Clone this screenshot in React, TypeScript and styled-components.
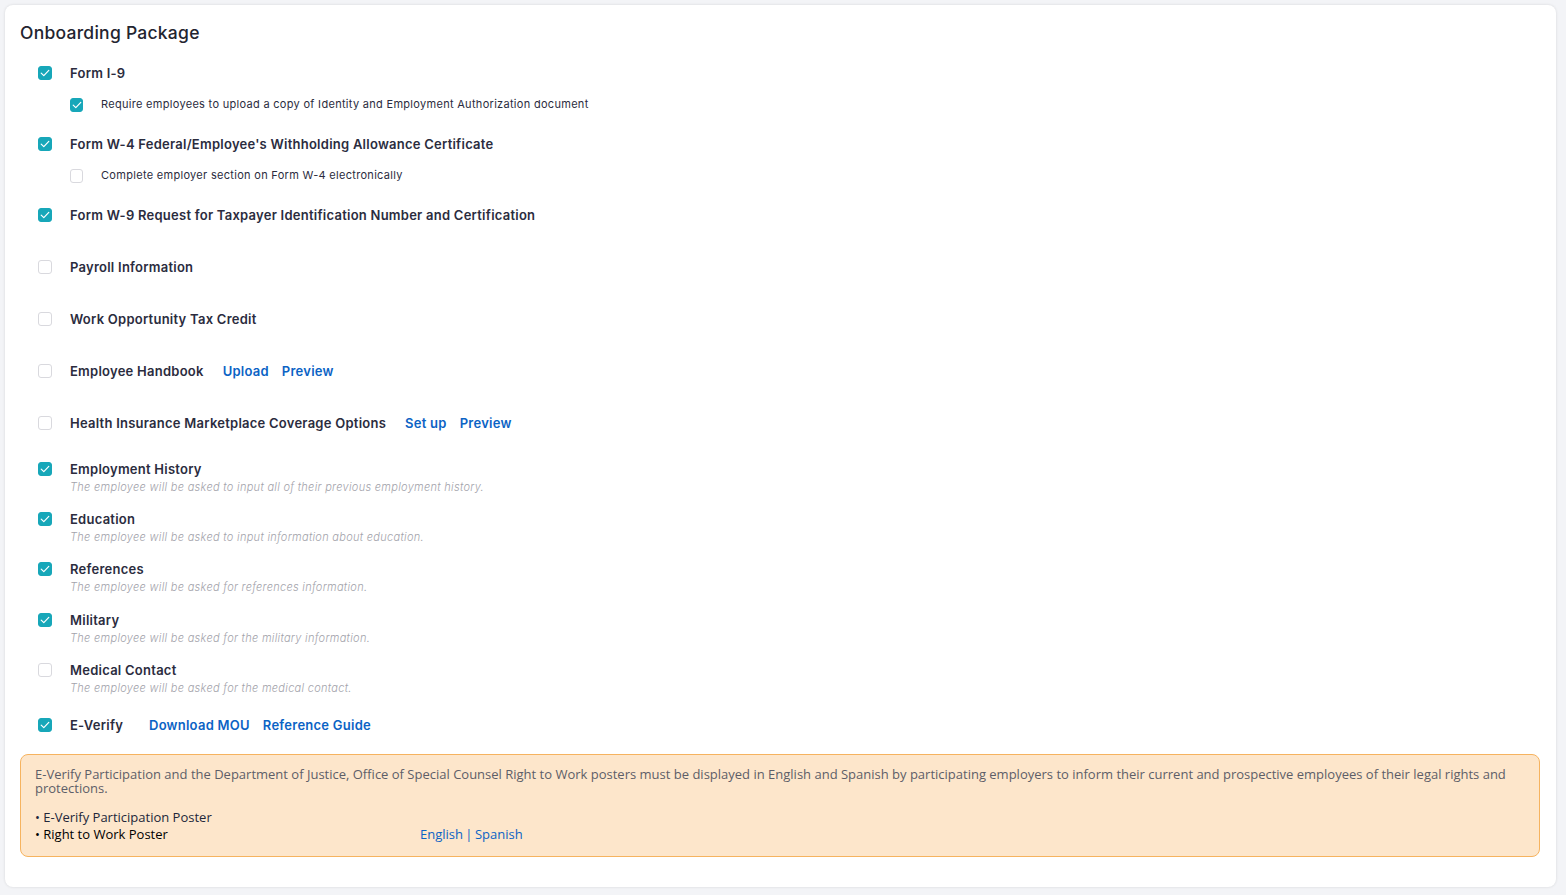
import React from 'react';
import styled, { createGlobalStyle } from 'styled-components';

/** Fonte principal dos rótulos e fonte do aviso. */
const LABEL_FONT = `Inter, "Noto Sans", "Liberation Sans", sans-serif`;
const NOTE_FONT = `"Open Sans", "Noto Sans", "Liberation Sans", sans-serif`;

const teal = '#17a7b9';
const linkBlue = '#0b63c5';
const ink = '#2b2c3e';

const GlobalStyle = createGlobalStyle`
  * { box-sizing: border-box; }
  html, body {
    margin: 0;
    padding: 0;
    background: #f3f4f7;
    font-family: ${LABEL_FONT};
  }
`;

const Page = styled.div`
  padding: 5px 10px 7px 5px;
  min-height: 895px;
`;

const Card = styled.section`
  background: #fff;
  border-radius: 8px;
  box-shadow: 0 0 3px rgba(0, 0, 0, 0.12);
  padding: 16px 16px 30px 15px;
`;

const Title = styled.h3`
  margin: 0 0 18px;
  font-size: 17.5px;
  line-height: 24px;
  font-weight: 500;
  letter-spacing: 0.25px;
  color: #23242f;
`;

const List = styled.div`
  display: flex;
  flex-direction: column;
`;

/** Linha de item (checkbox + rótulo + links). */
const Row = styled.div<{ $mt: number; $sub?: boolean }>`
  display: flex;
  align-items: center;
  height: 20px;
  margin-top: ${p => p.$mt}px;
  padding-left: ${p => (p.$sub ? 50 : 18)}px;
`;

const Box = styled.span<{ $on: boolean; $small?: boolean }>`
  flex: none;
  width: ${p => (p.$small ? 13 : 14)}px;
  height: 14px;
  border-radius: 3px;
  display: flex;
  align-items: center;
  justify-content: center;
  background: ${p => (p.$on ? teal : '#fff')};
  border: 1px solid ${p => (p.$on ? teal : '#d9d9de')};
  margin-top: ${p => (p.$small ? 2 : 0)}px;
`;

const Label = styled.span<{ $sub?: boolean; $w?: number }>`
  margin-left: 18px;
  font-size: ${p => (p.$sub ? 11 : 13)}px;
  font-weight: ${p => (p.$sub ? 400 : 600)};
  letter-spacing: ${p => (p.$sub ? 0.3 : 0.25)}px;
  color: ${ink};
  white-space: nowrap;
  ${p => (p.$w ? `width: ${p.$w}px;` : '')}
`;

const Links = styled.span`
  display: flex;
  gap: 13px;
  margin-left: 19px;
`;

const LinkText = styled.a`
  font-size: 13px;
  font-weight: 600;
  letter-spacing: 0.25px;
  color: ${linkBlue};
  text-decoration: none;
  cursor: pointer;
`;

const Desc = styled.div`
  padding-left: 50px;
  margin-top: 1px;
  height: 14px;
  line-height: 14px;
  font-size: 11px;
  font-weight: 300;
  font-style: italic;
  letter-spacing: 0.3px;
  color: #a3a3ab;
  white-space: nowrap;
`;

const Notice = styled.div`
  margin-top: 19px;
  background: #fde6cb;
  border: 1px solid #f6b35f;
  border-radius: 8px;
  padding: 12px 14px 13px;
  font-family: ${NOTE_FONT};
  font-size: 13px;
  line-height: 14px;
  color: #5d5e68;
`;

const PosterGrid = styled.div`
  display: grid;
  grid-template-columns: 385px auto;
  margin-top: 14px;
  line-height: 17px;
  font-size: 13px;
`;

const Poster = styled.span<{ $dark?: boolean }>`
  color: ${p => (p.$dark ? '#000' : '#22263a')};
`;

const Langs = styled.span`
  color: ${linkBlue};
  word-spacing: -1px;
`;

const Check = () => (
  <svg width="10" height="8" viewBox="0 0 10 8" fill="none">
    <path d="M1.2 4.1 3.8 6.6 8.8 1.4" stroke="#fff" strokeWidth="1.2" strokeLinecap="round" strokeLinejoin="round" />
  </svg>
);

const CheckBox = ({ on, small }: { on: boolean; small?: boolean }) => (
  <Box $on={on} $small={small}>{on && <Check />}</Box>
);

type Item = {
  label: string;
  on: boolean;
  mt: number;
  sub?: boolean;
  links?: string[];
  desc?: string;
  w?: number;
};

const items: Item[] = [
  { label: 'Form I-9', on: true, mt: 0 },
  { label: 'Require employees to upload a copy of Identity and Employment Authorization document', on: true, mt: 11, sub: true },
  { label: "Form W-4 Federal/Employee's Withholding Allowance Certificate", on: true, mt: 20 },
  { label: 'Complete employer section on Form W-4 electronically', on: false, mt: 11, sub: true },
  { label: 'Form W-9 Request for Taxpayer Identification Number and Certification', on: true, mt: 20 },
  { label: 'Payroll Information', on: false, mt: 32 },
  { label: 'Work Opportunity Tax Credit', on: false, mt: 32 },
  { label: 'Employee Handbook', on: false, mt: 32, links: ['Upload', 'Preview'] },
  { label: 'Health Insurance Marketplace Coverage Options', on: false, mt: 32, links: ['Set up', 'Preview'] },
  { label: 'Employment History', on: true, mt: 26, desc: 'The employee will be asked to input all of their previous employment history.' },
  { label: 'Education', on: true, mt: 15, desc: 'The employee will be asked to input information about education.' },
  { label: 'References', on: true, mt: 15, desc: 'The employee will be asked for references information.' },
  { label: 'Military', on: true, mt: 16, desc: 'The employee will be asked for the military information.' },
  { label: 'Medical Contact', on: false, mt: 15, desc: 'The employee will be asked for the medical contact.' },
  { label: 'E-Verify', on: true, mt: 20, links: ['Download MOU', 'Reference Guide'], w: 60 },
];

export default function App() {
  return (
    <>
      <GlobalStyle />
      <Page>
        <Card>
          <Title>Onboarding Package</Title>
          <List>
            {items.map(it => (
              <React.Fragment key={it.label}>
                <Row $mt={it.mt} $sub={it.sub}>
                  <CheckBox on={it.on} small={it.sub} />
                  <Label $sub={it.sub} $w={it.w}>{it.label}</Label>
                  {it.links && (
                    <Links>
                      {it.links.map(l => <LinkText key={l}>{l}</LinkText>)}
                    </Links>
                  )}
                </Row>
                {it.desc && <Desc>{it.desc}</Desc>}
              </React.Fragment>
            ))}
          </List>
          <Notice>
            E-Verify Participation and the Department of Justice, Office of Special Counsel Right to Work posters must be
            displayed in English and Spanish by participating employers to inform their current and prospective employees of
            their legal rights and protections.
            <PosterGrid>
              <Poster>• E-Verify Participation Poster</Poster>
              <span />
              <Poster $dark>• Right to Work Poster</Poster>
              <Langs>English | Spanish</Langs>
            </PosterGrid>
          </Notice>
        </Card>
      </Page>
    </>
  );
}
